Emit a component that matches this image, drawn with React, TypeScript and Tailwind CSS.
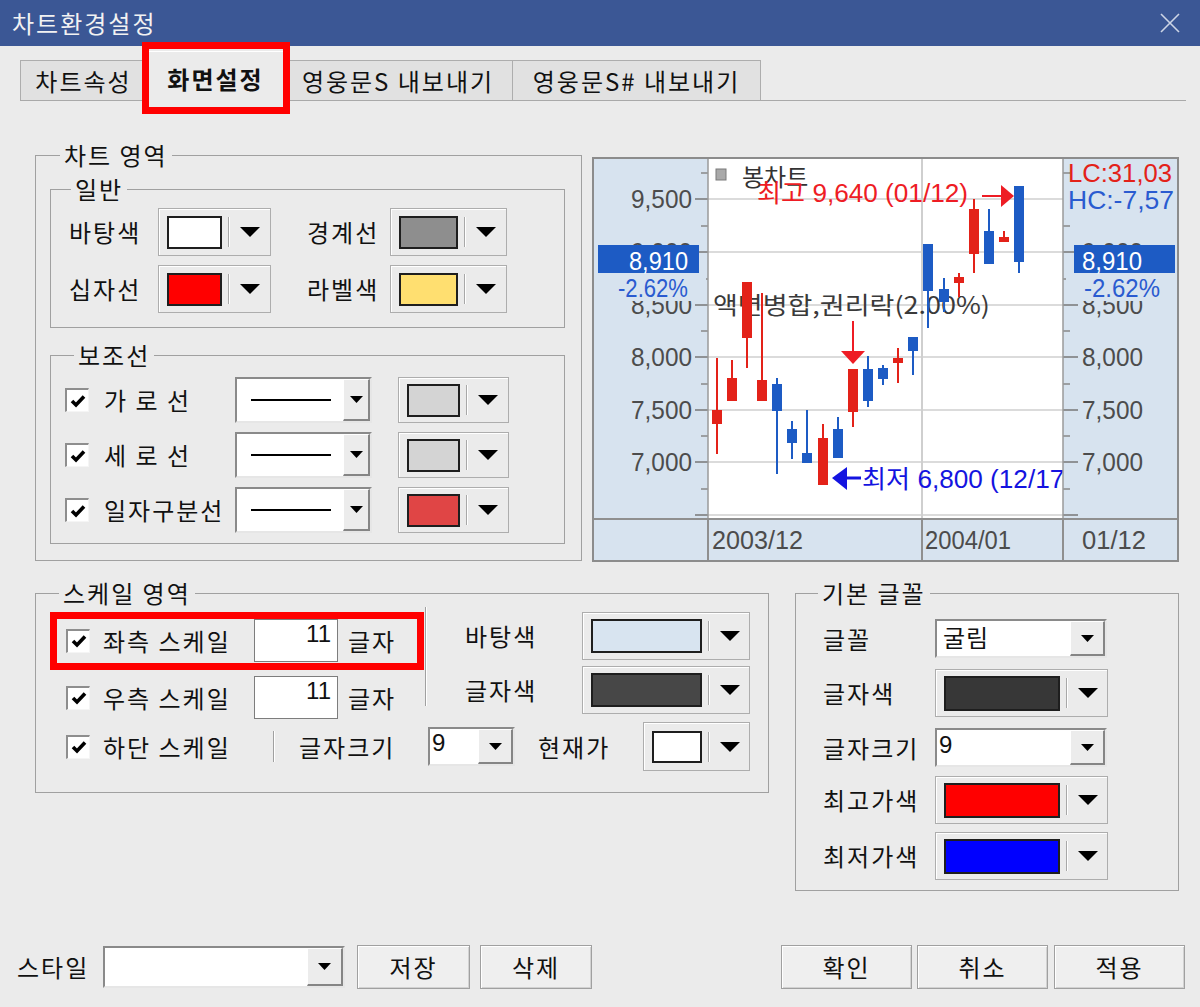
import React from "react";

const Tri = ({ small = false }: { small?: boolean }) =>
  small ? (
    <svg width="13" height="7" viewBox="0 0 13 7">
      <polygon points="0,0 13,0 6.5,7" fill="#000" />
    </svg>
  ) : (
    <svg width="20" height="10" viewBox="0 0 20 10">
      <polygon points="0,0 20,0 10,10" fill="#000" />
    </svg>
  );

const ColorBtn = ({ box, swatch }: { box: string; swatch: string }) => (
  <div
    className={`${box} flex items-center border border-[#adadad] bg-[#ebebeb] pl-[8px] shadow-[inset_1px_1px_0_#ffffff]`}
  >
    <div className={`${swatch} border-2 border-[#1e1e1e]`} />
    <div className="ml-[6px] h-[30px] w-[2px] border-l border-r border-l-[#a8a8a8] border-r-white" />
    <div className="flex flex-1 justify-center">
      <Tri />
    </div>
  </div>
);

const Combo = ({
  box,
  btn,
  children,
}: {
  box: string;
  btn: string;
  children?: React.ReactNode;
}) => (
  <div
    className={`${box} flex border-2 border-t-[#8a8a8a] border-l-[#8a8a8a] border-r-[#e6e6e6] border-b-[#e6e6e6] bg-white`}
  >
    <div className="flex-1 overflow-hidden">{children}</div>
    <div
      className={`${btn} flex items-center justify-center border-t border-l border-r-2 border-b-2 border-t-white border-l-white border-r-[#858585] border-b-[#858585] bg-[#ececec]`}
    >
      <Tri small />
    </div>
  </div>
);

const Check = () => (
  <div className="flex h-[24px] w-[24px] shrink-0 items-center justify-center border-t-2 border-l-2 border-r border-b border-t-[#8e8e8e] border-l-[#8e8e8e] border-r-[#f5f5f5] border-b-[#f5f5f5] bg-white">
    <svg width="16" height="14" viewBox="0 0 16 14">
      <path d="M2 7 L6 11 L14 2.5" fill="none" stroke="#000" strokeWidth="3.6" />
    </svg>
  </div>
);

const Btn = ({ w, label }: { w: string; label: string }) => (
  <button
    type="button"
    className={`${w} flex h-[44px] items-center justify-center border border-[#a0a0a0] bg-[#efefef] shadow-[inset_1px_1px_0_#ffffff,inset_-1px_-1px_0_#d2d2d2]`}
  >
    {label}
  </button>
);

const Num = ({ value }: { value: string }) => (
  <div className="h-[43px] w-[84px] border border-[#7d7d7d] bg-white pr-[6px] pt-[3px] text-right font-['Liberation_Sans',sans-serif] text-[24px] leading-[22px] tracking-normal">
    {value}
  </div>
);

const AX = "#d7e3ef";
const RED = "#e32219";
const BLUE = "#1d5bc4";
const GRID = [199, 252, 305, 357, 410, 462, 515];
const MINOR = [173, 226, 279, 331, 384, 436, 489];
const LEFT_LABELS: [number, string][] = [
  [199, "9,500"],
  [252, "9,000"],
  [305, "8,500"],
  [357, "8,000"],
  [410, "7,500"],
  [462, "7,000"],
];
const RIGHT_LABELS: [number, string][] = [
  [252, "9,000"],
  [305, "8,500"],
  [357, "8,000"],
  [410, "7,500"],
  [462, "7,000"],
];

// x, wickTop, bodyTop, bodyBottom, wickBottom, red?
const CANDLES: [number, number, number, number, number, number][] = [
  [717, 358, 410, 424, 454, 1],
  [732, 360, 378, 401, 401, 1],
  [747, 282, 282, 338, 368, 1],
  [762, 293, 380, 401, 401, 1],
  [777, 378, 384, 411, 474, 0],
  [792, 421, 429, 443, 459, 0],
  [807, 410, 453, 463, 463, 0],
  [823, 424, 438, 485, 485, 1],
  [838, 417, 429, 458, 458, 0],
  [853, 369, 369, 412, 427, 1],
  [868, 356, 369, 401, 407, 0],
  [883, 365, 368, 379, 385, 0],
  [898, 348, 358, 363, 383, 1],
  [913, 337, 337, 351, 375, 0],
  [928, 244, 244, 291, 328, 0],
  [944, 278, 289, 302, 312, 0],
  [959, 273, 277, 283, 297, 1],
  [974, 199, 209, 254, 273, 1],
  [989, 209, 231, 264, 264, 0],
  [1004, 231, 237, 242, 242, 1],
  [1019, 186, 186, 262, 273, 0],
];

const NUM_FONT = "Liberation Sans, Noto Sans CJK KR, sans-serif";
const KR_FONT = "Noto Sans CJK KR, sans-serif";

const Chart = () => (
  <svg
    width="587"
    height="405"
    viewBox="592 157 587 405"
    letterSpacing="0"
    className="block"
  >
    <defs>
      <clipPath id="plot">
        <rect x="708" y="157" width="355" height="362" />
      </clipPath>
    </defs>
    <rect x="592" y="157" width="587" height="405" fill={AX} />
    <rect x="708" y="158" width="355" height="361" fill="#ffffff" />
    {GRID.map((y) => (
      <line key={y} x1="708" x2="1063" y1={y} y2={y} stroke="#cfcfcf" strokeWidth="1.5" />
    ))}
    <line x1="922" x2="922" y1="158" y2="519" stroke="#cfcfcf" strokeWidth="2" />
    {GRID.map((y) => (
      <line key={"l" + y} x1="695" x2="708" y1={y} y2={y} stroke="#777" strokeWidth="1.5" />
    ))}
    {MINOR.map((y) => (
      <line key={"m" + y} x1="701" x2="708" y1={y} y2={y} stroke="#888" strokeWidth="1.5" />
    ))}
    {GRID.filter((y) => y !== 199).map((y) => (
      <line key={"r" + y} x1="1063" x2="1078" y1={y} y2={y} stroke="#777" strokeWidth="1.5" />
    ))}
    {MINOR.map((y) => (
      <line key={"rm" + y} x1="1063" x2="1070" y1={y} y2={y} stroke="#888" strokeWidth="1.5" />
    ))}
    {LEFT_LABELS.map(([y, t]) => (
      <text key={"lt" + y} x="692" y={y + 9} textAnchor="end" fontSize="25" fill="#4c4c4c" fontFamily={NUM_FONT} textLength="61" lengthAdjust="spacingAndGlyphs">
        {t}
      </text>
    ))}
    {RIGHT_LABELS.map(([y, t]) => (
      <text key={"rt" + y} x="1082" y={y + 9} fontSize="25" fill="#4c4c4c" fontFamily={NUM_FONT} textLength="61" lengthAdjust="spacingAndGlyphs">
        {t}
      </text>
    ))}
    {/* current price tags */}
    <rect x="598" y="245" width="101" height="28" fill={BLUE} />
    <text x="688" y="270" textAnchor="end" fontSize="25" fill="#fff" fontFamily={NUM_FONT} textLength="59" lengthAdjust="spacingAndGlyphs">8,910</text>
    <rect x="596" y="274" width="110" height="27" fill={AX} />
    <text x="688" y="297" textAnchor="end" fontSize="25" fill="#2a5bd0" fontFamily={NUM_FONT} textLength="70" lengthAdjust="spacingAndGlyphs">-2.62%</text>
    <rect x="1074" y="245" width="101" height="28" fill={BLUE} />
    <text x="1082" y="270" fontSize="25" fill="#fff" fontFamily={NUM_FONT} textLength="60" lengthAdjust="spacingAndGlyphs">8,910</text>
    <rect x="1066" y="274" width="110" height="27" fill={AX} />
    <text x="1084" y="297" fontSize="25" fill="#2a5bd0" fontFamily={NUM_FONT} textLength="76" lengthAdjust="spacingAndGlyphs">-2.62%</text>
    <text x="1068" y="182" fontSize="25" fill={RED} fontFamily={NUM_FONT} textLength="104" lengthAdjust="spacingAndGlyphs">LC:31,03</text>
    <text x="1068" y="209" fontSize="25" fill="#2a5bd0" fontFamily={NUM_FONT} textLength="106" lengthAdjust="spacingAndGlyphs">HC:-7,57</text>

    <g clipPath="url(#plot)">
      <rect x="716" y="169" width="10" height="11" fill="#a9a9a9" stroke="#7a7a7a" strokeWidth="1" />
      <text x="742" y="186" fontSize="24" fill="#333" fontFamily={KR_FONT}>봉차트</text>
      <text x="757" y="202" fontSize="25" fill="#ee1c24" fontFamily={NUM_FONT} textLength="211" lengthAdjust="spacingAndGlyphs">최고 9,640 (01/12)</text>
      <line x1="982" x2="1003" y1="196" y2="196" stroke="#ee1c24" strokeWidth="2" />
      <polygon points="1001,185 1014,196 1001,207" fill="#ee1c24" />
      <text x="713" y="314" fontSize="24" fill="#3a3a3a" fontFamily={KR_FONT} textLength="277" lengthAdjust="spacingAndGlyphs">액면병합,권리락(2.00%)</text>
      {CANDLES.map(([x, wt, bt, bb, wb, r]) => (
        <g key={x} fill={r ? RED : BLUE}>
          <rect x={x - 1} y={wt} width="2" height={wb - wt} />
          <rect x={x - 5} y={bt} width="10" height={Math.max(bb - bt, 3)} />
        </g>
      ))}
      <line x1="853" x2="853" y1="321" y2="353" stroke="#ee1c24" strokeWidth="2" />
      <polygon points="841,351 865,351 853,364" fill="#ee1c24" />
      <polygon points="832,478 847,467 847,490" fill="#1414e0" />
      <line x1="846" x2="861" y1="478" y2="478" stroke="#1414e0" strokeWidth="3" />
      <text x="862" y="488" fontSize="25" fill="#1414e0" fontFamily={NUM_FONT} textLength="211" lengthAdjust="spacingAndGlyphs">최저 6,800 (12/17)</text>
    </g>

    <line x1="708" x2="708" y1="158" y2="519" stroke="#9a9a9a" strokeWidth="1.5" />
    <line x1="1063" x2="1063" y1="158" y2="519" stroke="#9a9a9a" strokeWidth="1.5" />
    <line x1="593" x2="1178" y1="519" y2="519" stroke="#8f8f8f" strokeWidth="2" />
    {[708, 922, 1063].map((x) => (
      <line key={"d" + x} x1={x} x2={x} y1="519" y2="561" stroke="#8f8f8f" strokeWidth="2" />
    ))}
    <text x="712" y="549" fontSize="25" fill="#4c4c4c" fontFamily={NUM_FONT} textLength="91" lengthAdjust="spacingAndGlyphs">2003/12</text>
    <text x="925" y="549" fontSize="25" fill="#4c4c4c" fontFamily={NUM_FONT} textLength="86" lengthAdjust="spacingAndGlyphs">2004/01</text>
    <text x="1082" y="549" fontSize="25" fill="#4c4c4c" fontFamily={NUM_FONT} textLength="64" lengthAdjust="spacingAndGlyphs">01/12</text>
    <rect x="593" y="158" width="585" height="403" fill="none" stroke="#8c8c8c" strokeWidth="2" />
  </svg>
);

const Legend = ({ ml, children }: { ml: string; children: React.ReactNode }) => (
  <legend className={`${ml} px-[4px] leading-[28px]`}>{children}</legend>
);

export default function App() {
  return (
    <div className="relative h-[1007px] w-[1200px] overflow-hidden bg-[#ebebeb] font-['Noto_Sans_CJK_KR',sans-serif] text-[24px] leading-none tracking-[2px] text-[#111]">
      {/* title bar */}
      <div className="flex h-[46px] items-center justify-between bg-[#3b5795] pl-[12px] pr-[20px] text-[#f2f2f2]">
        <span>차트환경설정</span>
        <svg width="20" height="20" viewBox="0 0 20 20">
          <path d="M1 1 L19 19 M19 1 L1 19" stroke="#cdd5e6" strokeWidth="1.6" />
        </svg>
      </div>

      {/* tabs */}
      <div className="ml-[20px] mr-[14px] flex h-[55px] items-end border-b border-[#a9a9a9]">
        <div className="flex h-[40px] w-[127px] items-center justify-center border border-b-0 border-[#adadad] bg-[#e1e1e1]">
          차트속성
        </div>
        <div className="-mb-px flex h-[50px] w-[137px] items-center justify-center border-t border-l border-r border-t-white border-l-white border-r-[#9a9a9a] bg-[#ebebeb] pt-[5px] font-bold">
          화면설정
        </div>
        <div className="flex h-[40px] w-[229px] items-center justify-center border border-b-0 border-l-0 border-[#adadad] bg-[#e1e1e1]">
          영웅문S 내보내기
        </div>
        <div className="-ml-px flex h-[40px] w-[249px] items-center justify-center border border-b-0 border-[#adadad] bg-[#e1e1e1]">
          영웅문S# 내보내기
        </div>
      </div>

      {/* row 1 */}
      <div className="mt-[40px] flex items-start pl-[35px]">
        <fieldset className="w-[547px] border border-[#a0a0a0]">
          <Legend ml="ml-[24px]">차트 영역</Legend>
          <div className="pl-[14px] pr-[16px] pb-[16px]">
            <fieldset className="mt-[6px] border border-[#a0a0a0]">
              <Legend ml="ml-[20px]">일반</Legend>
              <div className="flex flex-col gap-[9px] pt-[5px] pb-[14px] pl-[18px]">
                <div className="flex h-[48px] items-center">
                  <span className="w-[89px]">바탕색</span>
                  <ColorBtn box="w-[113px] h-[48px]" swatch="w-[55px] h-[33px] bg-white" />
                  <span className="ml-[36px] w-[83px]">경계선</span>
                  <ColorBtn box="w-[117px] h-[48px]" swatch="w-[59px] h-[33px] bg-[#8e8e8e]" />
                </div>
                <div className="flex h-[48px] items-center">
                  <span className="w-[89px]">십자선</span>
                  <ColorBtn box="w-[113px] h-[48px]" swatch="w-[55px] h-[33px] bg-[#ff0000]" />
                  <span className="ml-[36px] w-[83px]">라벨색</span>
                  <ColorBtn box="w-[117px] h-[48px]" swatch="w-[59px] h-[33px] bg-[#ffdf70]" />
                </div>
              </div>
            </fieldset>

            <fieldset className="mt-[13px] border border-[#a0a0a0]">
              <Legend ml="ml-[23px]">보조선</Legend>
              <div className="flex flex-col gap-[9px] pt-[8px] pb-[10px] pl-[14px]">
                {[
                  { label: "가 로 선", color: "bg-[#d4d4d4]" },
                  { label: "세 로 선", color: "bg-[#d4d4d4]" },
                  { label: "일자구분선", color: "bg-[#e04545]" },
                ].map((r) => (
                  <div key={r.label} className="flex h-[46px] items-center">
                    <Check />
                    <span className="ml-[15px] w-[131px] whitespace-pre">{r.label}</span>
                    <Combo box="w-[137px] h-[46px]" btn="w-[27px]">
                      <div className="flex h-full items-center pl-[14px]">
                        <div className="h-[2px] w-[80px] bg-black" />
                      </div>
                    </Combo>
                    <div className="ml-[26px]">
                      <ColorBtn box="w-[111px] h-[46px]" swatch={`w-[53px] h-[33px] ${r.color}`} />
                    </div>
                  </div>
                ))}
              </div>
            </fieldset>
          </div>
        </fieldset>

        <div className="ml-[10px] mt-[16px]">
          <Chart />
        </div>
      </div>

      {/* row 2 */}
      <div className="mt-[17px] flex items-start pl-[35px]">
        <fieldset className="w-[734px] border border-[#a0a0a0]">
          <Legend ml="ml-[23px]">스케일 영역</Legend>
          <div className="pb-[21px]">
            <div className="flex h-[112px]">
              <div className="flex w-[389px] flex-col gap-[14px] pt-[12px] pl-[30px]">
                <div className="flex h-[43px] items-center">
                  <Check />
                  <span className="ml-[13px] w-[151px]">좌측 스케일</span>
                  <Num value="11" />
                  <span className="ml-[10px]">글자</span>
                </div>
                <div className="flex h-[43px] items-center">
                  <Check />
                  <span className="ml-[13px] w-[151px]">우측 스케일</span>
                  <Num value="11" />
                  <span className="ml-[10px]">글자</span>
                </div>
              </div>
              <div className="h-[99px] w-[2px] border-l border-r border-l-[#a0a0a0] border-r-white" />
              <div className="flex flex-col gap-[6px] pt-[5px] pl-[38px]">
                <div className="flex h-[48px] items-center">
                  <span className="w-[117px]">바탕색</span>
                  <ColorBtn box="w-[168px] h-[48px]" swatch="w-[111px] h-[34px] bg-[#d8e4f0]" />
                </div>
                <div className="flex h-[48px] items-center">
                  <span className="w-[117px]">글자색</span>
                  <ColorBtn box="w-[168px] h-[48px]" swatch="w-[111px] h-[34px] bg-[#474747]" />
                </div>
              </div>
            </div>
            <div className="mt-[3px] flex h-[49px] items-center pl-[30px]">
              <Check />
              <span className="ml-[13px] w-[170px]">하단 스케일</span>
              <div className="h-[31px] w-[2px] border-l border-r border-l-[#a0a0a0] border-r-white" />
              <span className="ml-[24px] w-[129px]">글자크기</span>
              <Combo box="w-[87px] h-[39px]" btn="w-[35px]">
                <div className="pl-[2px] pt-[3px] font-['Liberation_Sans',sans-serif] text-[24px] leading-[22px] tracking-normal">
                  9
                </div>
              </Combo>
              <span className="ml-[23px] w-[105px]">현재가</span>
              <ColorBtn box="w-[107px] h-[49px]" swatch="w-[50px] h-[32px] bg-white" />
            </div>
          </div>
        </fieldset>

        <fieldset className="ml-[26px] w-[384px] border border-[#a0a0a0]">
          <Legend ml="ml-[22px]">기본 글꼴</Legend>
          <div className="flex flex-col pt-[12px] pb-[10px] pl-[27px]">
            <div className="flex h-[39px] items-center">
              <span className="w-[112px]">글꼴</span>
              <Combo box="w-[172px] h-[39px]" btn="w-[35px]">
                <div className="pl-[6px] pt-[4px] leading-[24px] tracking-[1px]">굴림</div>
              </Combo>
            </div>
            <div className="mt-[11px] flex h-[48px] items-center">
              <span className="w-[112px]">글자색</span>
              <ColorBtn box="w-[173px] h-[48px]" swatch="w-[116px] h-[35px] bg-[#373737]" />
            </div>
            <div className="mt-[11px] flex h-[39px] items-center">
              <span className="w-[112px]">글자크기</span>
              <Combo box="w-[172px] h-[39px]" btn="w-[35px]">
                <div className="pl-[2px] pt-[4px] font-['Liberation_Sans',sans-serif] text-[24px] leading-[22px] tracking-normal">
                  9
                </div>
              </Combo>
            </div>
            <div className="mt-[9px] flex h-[48px] items-center">
              <span className="w-[112px]">최고가색</span>
              <ColorBtn box="w-[173px] h-[48px]" swatch="w-[116px] h-[35px] bg-[#ff0000]" />
            </div>
            <div className="mt-[8px] flex h-[48px] items-center">
              <span className="w-[112px]">최저가색</span>
              <ColorBtn box="w-[173px] h-[48px]" swatch="w-[116px] h-[35px] bg-[#0000ff]" />
            </div>
          </div>
        </fieldset>
      </div>

      {/* bottom bar */}
      <div className="mt-[54px] flex h-[44px] items-center pl-[17px] pr-[15px]">
        <span className="w-[86px]">스타일</span>
        <Combo box="w-[242px] h-[42px]" btn="w-[36px]" />
        <div className="ml-[12px]">
          <Btn w="w-[113px]" label="저장" />
        </div>
        <div className="ml-[10px]">
          <Btn w="w-[112px]" label="삭제" />
        </div>
        <div className="flex-1" />
        <Btn w="w-[131px]" label="확인" />
        <div className="ml-[5px]">
          <Btn w="w-[131px]" label="취소" />
        </div>
        <div className="ml-[6px]">
          <Btn w="w-[131px]" label="적용" />
        </div>
      </div>

      {/* red highlight annotations */}
      <div className="pointer-events-none absolute left-[142px] top-[42px] h-[72px] w-[148px] border-[7px] border-[#ff0000]" />
      <div className="pointer-events-none absolute left-[50px] top-[612px] h-[58px] w-[374px] border-[7px] border-[#ff0000]" />
    </div>
  );
}
